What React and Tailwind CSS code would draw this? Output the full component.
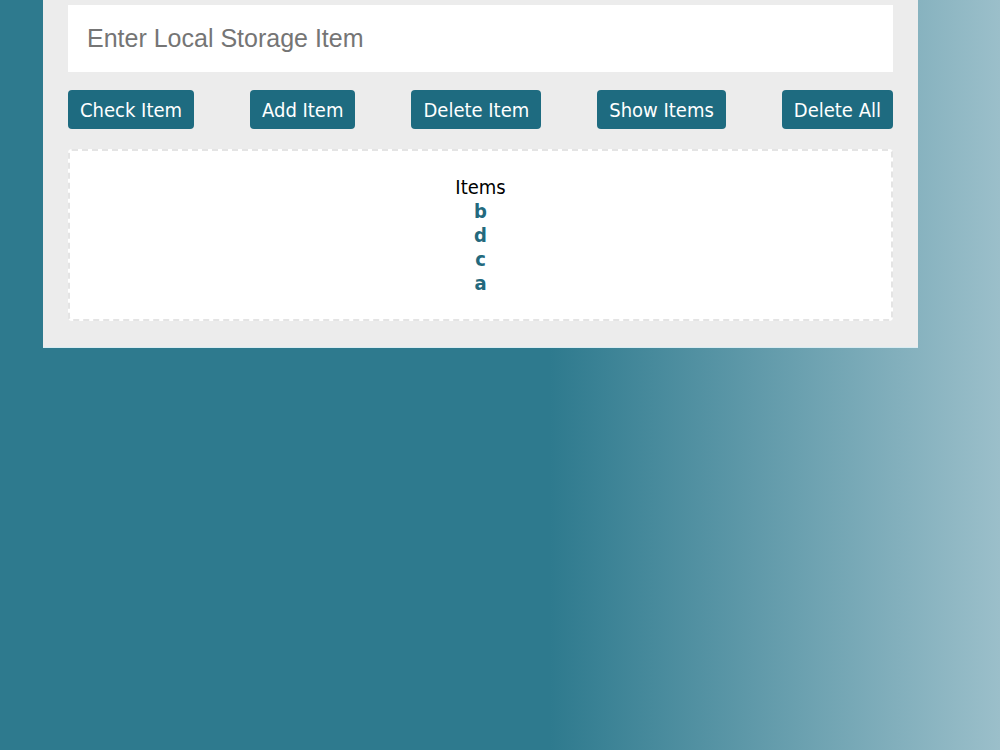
import { useState } from "react";

const BUTTONS = ["Check Item", "Add Item", "Delete Item", "Show Items", "Delete All"];

function App() {
  const [value, setValue] = useState("");
  const items = ["b", "d", "c", "a"];

  return (
    <div className="min-h-[750px] w-full overflow-hidden bg-[linear-gradient(to_right,#2e7a8e_0%,#2e7a8e_55%,#9bbfca_100%)]">
      <div className="-mt-[20px] ml-[43px] w-[875px] bg-[#ececec] px-[25px] pt-[25px] pb-[26px] shadow-[0_1px_0_#d8ecf2]">
        <input
          type="text"
          value={value}
          onChange={(e) => setValue(e.target.value)}
          placeholder="Enter Local Storage Item"
          className="block h-[67px] w-full bg-white px-[19px] font-['Liberation_Sans',Arial,sans-serif] text-[25px] text-black placeholder:text-[#757575] focus:outline-none"
        />
        <div className="mt-[18px] flex justify-between">
          {BUTTONS.map((b) => (
            <button
              key={b}
              className="h-[39px] rounded-[4px] bg-[#1e6b80] px-[12px] font-['DejaVu_Sans_Condensed','DejaVu_Sans',sans-serif] text-[20px] text-white [font-stretch:condensed]"
            >
              {b}
            </button>
          ))}
        </div>
        <div className="mt-[20px] rounded-[4px] border-2 border-dashed border-[#e4e4e4] bg-white py-[24px] text-center font-['DejaVu_Sans_Condensed','DejaVu_Sans',sans-serif] text-[20px] leading-[24px] [font-stretch:condensed]">
          <div className="text-black">Items</div>
          {items.map((item) => (
            <div key={item} className="font-bold text-[#23697d]">
              {item}
            </div>
          ))}
        </div>
      </div>
    </div>
  );
}

export default App;
